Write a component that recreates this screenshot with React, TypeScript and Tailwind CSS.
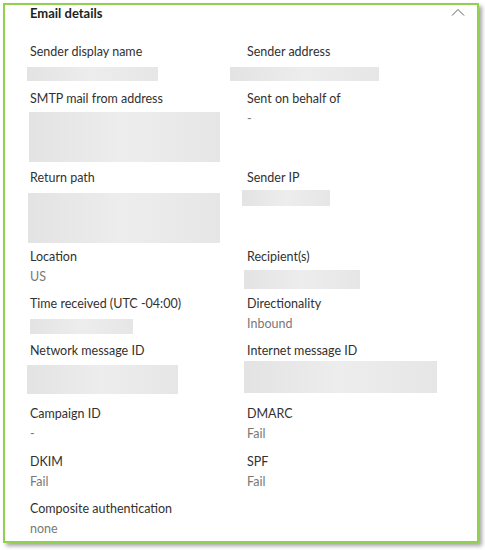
import React from "react";

type Val =
  | { kind: "text"; text: string }
  | { kind: "blur"; cls: string };

type Field = { label: string; value: Val };

type Row = { height: string; extra?: string; cells: Field[] };

const t = (text: string): Val => ({ kind: "text", text });
const b = (cls: string): Val => ({ kind: "blur", cls });

const rows: Row[] = [
  {
    height: "h-[20px]",
    cells: [
      { label: "Sender display name", value: b("ml-[-3px] w-[131px] mt-[5px] h-[14px]") },
      { label: "Sender address", value: b("ml-[-17px] w-[149px] mt-[5px] h-[14px]") },
    ],
  },
  {
    height: "h-[52px]",
    cells: [
      { label: "SMTP mail from address", value: b("ml-[-1px] w-[191px] mt-[3px] h-[50px]") },
      { label: "Sent on behalf of", value: t("-") },
    ],
  },
  {
    height: "h-[52px]",
    cells: [
      { label: "Return path", value: b("ml-[-2px] w-[192px] mt-[5px] h-[50px]") },
      { label: "Sender IP", value: b("ml-[-5px] w-[88px] mt-[2px] h-[16px]") },
    ],
  },
  {
    height: "h-[20px]",
    cells: [
      { label: "Location", value: t("US") },
      { label: "Recipient(s)", value: b("ml-[-3px] w-[116px] mt-[3px] h-[19px]") },
    ],
  },
  {
    height: "h-[20px]",
    cells: [
      { label: "Time received (UTC -04:00)", value: b("ml-0 w-[103px] mt-[5px] h-[15px]") },
      { label: "Directionality", value: t("Inbound") },
    ],
  },
  {
    height: "h-[36px]",
    cells: [
      { label: "Network message ID", value: b("ml-[-3px] w-[151px] mt-[4px] h-[29px]") },
      { label: "Internet message ID", value: b("ml-[-3px] w-[193px] mt-0 h-[32px]") },
    ],
  },
  {
    height: "h-[20px]",
    cells: [
      { label: "Campaign ID", value: t("-") },
      { label: "DMARC", value: t("Fail") },
    ],
  },
  {
    height: "h-[20px]",
    extra: "mt-px",
    cells: [
      { label: "DKIM", value: t("Fail") },
      { label: "SPF", value: t("Fail") },
    ],
  },
  {
    height: "h-[20px]",
    cells: [{ label: "Composite authentication", value: t("none") }],
  },
];

const Value = ({ value, height }: { value: Val; height: string }) => (
  <div className={`${height} flex flex-col`}>
    {value.kind === "text" ? (
      <div className="text-[12.5px] leading-5 text-[#7a7876]">{value.text}</div>
    ) : (
      <div
        className={`${value.cls} shrink-0 bg-gradient-to-r from-[#e3e3e3] via-[#ededed] to-[#e6e6e6]`}
      />
    )}
  </div>
);

export default function App() {
  return (
    <div className="min-h-screen bg-white pt-[3px] pl-[3px] font-['Lato','Liberation_Sans',sans-serif]">
      <div className="w-[476px] h-[540px] border-2 border-[#92d050] bg-white shadow-[3px_3px_4px_rgba(0,0,0,0.35)] pl-[25px]">
        <div className="flex items-start justify-between h-[16px] pr-[12px]">
          <h2 className="text-[13px] font-bold text-[#201f1e] leading-[16px]">Email details</h2>
          <svg width="14" height="8" viewBox="0 0 14 8" className="mt-[3px]">
            <polyline points="1,7.5 7,1.5 13,7.5" fill="none" stroke="#605e5c" strokeWidth="1" />
          </svg>
        </div>
        <div className="mt-[21px] flex flex-col gap-[7px]">
          {rows.map((row, i) => (
            <div key={i} className={`grid grid-cols-[217px_1fr] ${row.extra ?? ""}`}>
              {row.cells.map((c) => (
                <div key={c.label}>
                  <div className="text-[12.5px] leading-5 text-[#323130]">{c.label}</div>
                  <Value value={c.value} height={row.height} />
                </div>
              ))}
            </div>
          ))}
        </div>
      </div>
    </div>
  );
}
